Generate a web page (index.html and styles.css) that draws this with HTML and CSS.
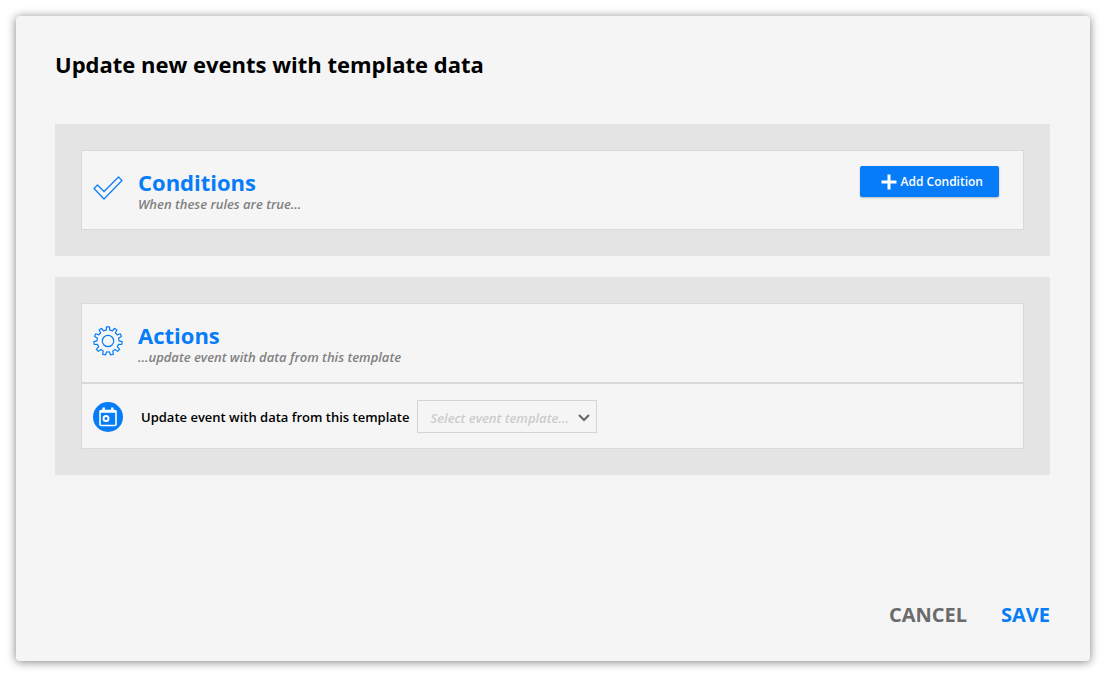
FILE: index.html
```html
<!DOCTYPE html>
<html lang="en">
<head>
    <meta charset="UTF-8">
    <meta name="viewport" content="width=device-width, initial-scale=1.0">
    <title>Update new events with template data</title>
    <link rel="stylesheet" href="styles.css">
</head>
<body>
    <form class="dialog">
        <h1 class="dialog-title">Update new events with template data</h1>

        <section class="panel">
            <div class="card">
                <div class="card-header">
                    <svg class="icon outline" viewBox="0 0 30 30" aria-hidden="true">
                        <path d="M1 15.5L4.5 12L11 18.5L25.5 4L29 7.5L11 26Z"/>
                    </svg>
                    <div class="card-heading">
                        <h2>Conditions</h2>
                        <p>When these rules are true...</p>
                    </div>
                    <button type="button" class="add-button">
                        <svg class="plus" viewBox="0 0 16 16" aria-hidden="true">
                            <path d="M8 0.5V15.5M0.5 8H15.5"/>
                        </svg>
                        Add Condition
                    </button>
                </div>
            </div>
        </section>

        <section class="panel">
            <div class="card">
                <div class="card-header">
                    <svg class="icon outline" viewBox="0 0 30 30" aria-hidden="true">
                        <path d="M13.28 4.14L13.52 .88L16.48 .88L16.72 4.14Q18.2 4.3 19.43 4.93L21.39 2.32L23.88 3.92L22.32 6.79Q23.4 7.8 24.17 8.92L27.23 7.78L28.46 10.48L25.6 12.05Q26 13.4 26 14.84L29.19 15.54L28.77 18.48L25.51 18.25Q25.1 19.6 24.34 20.81L26.65 23.13L24.7 25.37L22.08 23.42Q21 24.4 19.71 24.94L20.4 28.13L17.55 28.97L16.41 25.91Q15 26.1 13.59 25.91L12.45 28.97L9.6 28.13L10.29 24.94Q9 24.4 7.92 23.42L5.3 25.37L3.35 23.13L5.66 20.81Q4.9 19.6 4.49 18.25L1.23 18.48L.81 15.54L4 14.84Q4 13.4 4.4 12.05L1.54 10.48L2.77 7.78L5.83 8.92Q6.6 7.8 7.68 6.79L6.12 3.92L8.61 2.32L10.57 4.93Q11.8 4.3 13.28 4.14Z"/>
                        <circle cx="15" cy="15" r="5.7"/>
                    </svg>
                    <div class="card-heading">
                        <h2>Actions</h2>
                        <p>...update event with data from this template</p>
                    </div>
                </div>
                <div class="card-row">
                    <svg class="icon" viewBox="0 0 30 30" aria-hidden="true">
                        <circle cx="15" cy="15" r="15" fill="#077cf8"/>
                        <rect x="7" y="8.5" width="16" height="15" rx="1" fill="none" stroke="#fff" stroke-width="1.6"/>
                        <path d="M7 9.5H23M10.7 5.5V10M19.3 5.5V10" fill="none" stroke="#fff" stroke-width="2.4"/>
                        <circle cx="13" cy="16.5" r="2.5" fill="none" stroke="#fff" stroke-width="2"/>
                    </svg>
                    <label for="template">Update event with data from this template</label>
                    <div class="select-wrap">
                        <select id="template" name="template">
                            <option value="">Select event template...</option>
                        </select>
                        <svg class="chevron" viewBox="0 0 12 8" aria-hidden="true">
                            <path d="M1 1L6 6L11 1"/>
                        </svg>
                    </div>
                </div>
            </div>
        </section>

        <div class="dialog-footer">
            <button type="button" class="text-button">CANCEL</button>
            <button type="submit" class="text-button save">SAVE</button>
        </div>
    </form>
</body>
</html>
```

FILE: styles.css
```css
* {
    box-sizing: border-box;
}

body {
    margin: 0;
    padding: 16px;
    background-color: #fff;
    color: #000;
    font-family: "Open Sans", "Noto Sans", sans-serif;
}

h1, h2, p {
    margin: 0;
}

button, select {
    font-family: inherit;
    cursor: pointer;
}

.dialog {
    display: flex;
    flex-direction: column;
    min-height: calc(100vh - 32px);
    padding: 32px 40px 32px 39px;
    background-color: #f5f5f5;
    border-radius: 4px;
    box-shadow: 0 1px 10px rgba(0, 0, 0, 0.5);
}

.dialog-title {
    margin-bottom: 44px;
    font-size: 22px;
    line-height: 32px;
}

.panel {
    margin-bottom: 21px;
    padding: 26px;
    background-color: #e4e4e4;
}

.card {
    background-color: #f5f5f5;
    border: 1px solid #d9d9d9;
}

.card-header {
    display: flex;
    align-items: flex-start;
    padding: 15px 24px 19px 11px;
}

.icon {
    flex: none;
    width: 30px;
    height: 30px;
}

.outline {
    margin: 7px 15px 0 0;
    fill: none;
    stroke: #077cf8;
    stroke-width: 1.2;
    stroke-linejoin: round;
}

.card-heading {
    flex: 1;
}

.card-heading h2 {
    color: #077cf8;
    font-size: 22px;
    line-height: 32px;
}

.card-heading p {
    color: #808080;
    font-size: 13px;
    font-style: italic;
    font-weight: 600;
    line-height: 12px;
}

.add-button {
    display: flex;
    align-items: center;
    gap: 4px;
    height: 31px;
    padding: 0 16px 0 21px;
    border: none;
    border-radius: 2px;
    background-color: #077cf8;
    box-shadow: 0 1px 2px rgba(0, 0, 0, 0.25);
    color: #fff;
    font-size: 12px;
    font-weight: 600;
}

.plus {
    width: 16px;
    height: 16px;
    fill: none;
    stroke: #fff;
    stroke-width: 3;
}

.card-row {
    display: flex;
    align-items: center;
    padding: 16px 11px 15px;
    border-top: 2px solid #d9d9d9;
}

.card-row label {
    margin: 0 8px 0 18px;
    font-size: 13px;
    font-weight: 600;
}

.select-wrap {
    position: relative;
}

.select-wrap select {
    width: 180px;
    height: 33px;
    padding: 3px 26px 0 12px;
    appearance: none;
    border: 1px solid #d4d4d4;
    border-radius: 0;
    background-color: transparent;
    color: #ccc;
    font-size: 13px;
    font-style: italic;
    font-weight: 600;
}

.chevron {
    position: absolute;
    top: 14px;
    right: 7px;
    width: 12px;
    height: 8px;
    fill: none;
    stroke: #666;
    stroke-width: 2;
    pointer-events: none;
}

.dialog-footer {
    display: flex;
    justify-content: flex-end;
    gap: 34px;
    margin-top: auto;
}

.text-button {
    padding: 0;
    border: none;
    background: none;
    color: #6b6b6b;
    font-size: 20px;
    font-weight: 700;
    line-height: 28px;
}

.save {
    color: #077cf8;
}
```
